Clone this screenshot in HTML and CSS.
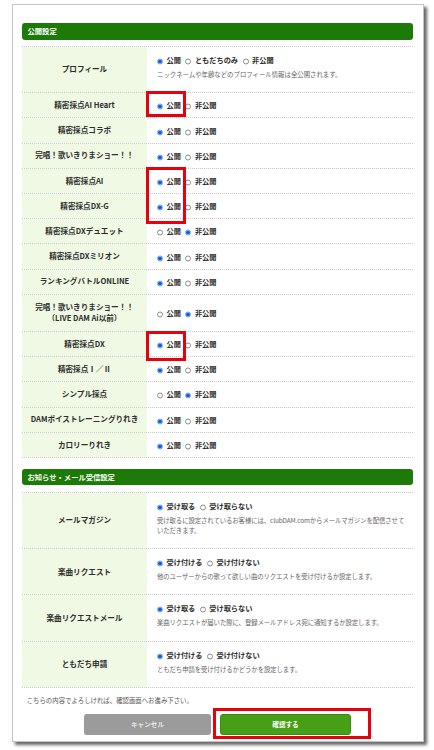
FILE: index.html
```html
<!DOCTYPE html>
<html lang="ja">
<head>
<meta charset="utf-8">
<title>公開設定</title>
<link rel="stylesheet" href="styles.css">
</head>
<body>
<div class="frame">
  <h2 class="sec-head">公開設定</h2>
  <div class="table">
    <div class="row row-desc">
      <div class="lbl">プロフィール</div>
      <div class="val">
        <div class="opts"><span class="opt"><i class="radio on"></i>公開</span><span class="opt"><i class="radio"></i>ともだちのみ</span><span class="opt"><i class="radio"></i>非公開</span></div>
        <p class="desc">ニックネームや年齢などのプロフィール情報は全公開されます。</p>
      </div>
    </div>
    <div class="row"><div class="lbl">精密採点AI Heart</div><div class="val"><div class="opts"><span class="opt"><i class="radio on"></i>公開</span><span class="opt"><i class="radio"></i>非公開</span></div></div></div>
    <div class="row"><div class="lbl">精密採点コラボ</div><div class="val"><div class="opts"><span class="opt"><i class="radio on"></i>公開</span><span class="opt"><i class="radio"></i>非公開</span></div></div></div>
    <div class="row"><div class="lbl">完唱！歌いきりまショー！！</div><div class="val"><div class="opts"><span class="opt"><i class="radio on"></i>公開</span><span class="opt"><i class="radio"></i>非公開</span></div></div></div>
    <div class="row"><div class="lbl">精密採点AI</div><div class="val"><div class="opts"><span class="opt"><i class="radio on"></i>公開</span><span class="opt"><i class="radio"></i>非公開</span></div></div></div>
    <div class="row"><div class="lbl">精密採点DX-G</div><div class="val"><div class="opts"><span class="opt"><i class="radio on"></i>公開</span><span class="opt"><i class="radio"></i>非公開</span></div></div></div>
    <div class="row"><div class="lbl">精密採点DXデュエット</div><div class="val"><div class="opts"><span class="opt"><i class="radio"></i>公開</span><span class="opt"><i class="radio on"></i>非公開</span></div></div></div>
    <div class="row"><div class="lbl">精密採点DXミリオン</div><div class="val"><div class="opts"><span class="opt"><i class="radio on"></i>公開</span><span class="opt"><i class="radio"></i>非公開</span></div></div></div>
    <div class="row"><div class="lbl">ランキングバトルONLINE</div><div class="val"><div class="opts"><span class="opt"><i class="radio on"></i>公開</span><span class="opt"><i class="radio"></i>非公開</span></div></div></div>
    <div class="row row-tall"><div class="lbl">完唱！歌いきりまショー！！<br>（LIVE DAM Ai以前）</div><div class="val"><div class="opts"><span class="opt"><i class="radio"></i>公開</span><span class="opt"><i class="radio on"></i>非公開</span></div></div></div>
    <div class="row"><div class="lbl">精密採点DX</div><div class="val"><div class="opts"><span class="opt"><i class="radio on"></i>公開</span><span class="opt"><i class="radio"></i>非公開</span></div></div></div>
    <div class="row"><div class="lbl">精密採点Ⅰ／Ⅱ</div><div class="val"><div class="opts"><span class="opt"><i class="radio on"></i>公開</span><span class="opt"><i class="radio"></i>非公開</span></div></div></div>
    <div class="row"><div class="lbl">シンプル採点</div><div class="val"><div class="opts"><span class="opt"><i class="radio"></i>公開</span><span class="opt"><i class="radio on"></i>非公開</span></div></div></div>
    <div class="row"><div class="lbl">DAMボイストレーニングりれき</div><div class="val"><div class="opts"><span class="opt"><i class="radio on"></i>公開</span><span class="opt"><i class="radio"></i>非公開</span></div></div></div>
    <div class="row"><div class="lbl">カロリーりれき</div><div class="val"><div class="opts"><span class="opt"><i class="radio on"></i>公開</span><span class="opt"><i class="radio"></i>非公開</span></div></div></div>
  </div>

  <h2 class="sec-head sec-head-2">お知らせ・メール受信設定</h2>
  <div class="table table-2">
    <div class="row row-desc">
      <div class="lbl">メールマガジン</div>
      <div class="val">
        <div class="opts"><span class="opt"><i class="radio on"></i>受け取る</span><span class="opt"><i class="radio"></i>受け取らない</span></div>
        <p class="desc">受け取るに設定されているお客様には、clubDAM.comからメールマガジンを配信させていただきます。</p>
      </div>
    </div>
    <div class="row row-desc">
      <div class="lbl">楽曲リクエスト</div>
      <div class="val">
        <div class="opts"><span class="opt"><i class="radio on"></i>受け付ける</span><span class="opt"><i class="radio"></i>受け付けない</span></div>
        <p class="desc">他のユーザーからの歌って欲しい曲のリクエストを受け付けるか設定します。</p>
      </div>
    </div>
    <div class="row row-desc">
      <div class="lbl">楽曲リクエストメール</div>
      <div class="val">
        <div class="opts"><span class="opt"><i class="radio on"></i>受け取る</span><span class="opt"><i class="radio"></i>受け取らない</span></div>
        <p class="desc">楽曲リクエストが届いた際に、登録メールアドレス宛に通知するか設定します。</p>
      </div>
    </div>
    <div class="row row-desc">
      <div class="lbl">ともだち申請</div>
      <div class="val">
        <div class="opts"><span class="opt"><i class="radio on"></i>受け付ける</span><span class="opt"><i class="radio"></i>受け付けない</span></div>
        <p class="desc">ともだち申請を受け付けるかどうかを設定します。</p>
      </div>
    </div>
  </div>

  <p class="note">こちらの内容でよろしければ、確認画面へお進み下さい。</p>
  <div class="btns">
    <button class="btn btn-cancel" type="button">キャンセル</button>
    <button class="btn btn-ok" type="button">確認する</button>
  </div>
</div>

<div class="mark mark-1"></div>
<div class="mark mark-2"></div>
<div class="mark mark-3"></div>
<div class="mark mark-4"></div>
</body>
</html>
```

FILE: styles.css
```css
* {
  box-sizing: border-box;
  margin: 0;
  padding: 0;
}

html,
body {
  background: #fff;
}

body {
  position: relative;
  width: 434px;
  height: 750px;
  overflow: hidden;
  font-family: "Noto Sans CJK JP", "Noto Sans", sans-serif;
  color: #333;
}

.frame {
  margin: 4px 0 0 12px;
  width: 412px;
  height: 738px;
  border: 1px solid #c4c4c4;
  box-shadow: 3px 3px 3px rgba(0, 0, 0, 0.6);
  padding: 18.3px 10px 0 9px;
  background: #fff;
}

.sec-head {
  height: 17px;
  background: #1d7a08;
  border-radius: 3px;
  color: #fff;
  font-size: 7.3px;
  font-weight: 700;
  line-height: 17px;
  padding-left: 5.5px;
}

.sec-head-2 {
  margin-top: 11px;
  height: 16.5px;
  line-height: 16.5px;
}

.table {
  margin-top: 5.4px;
  border-top: 1px dotted #c9c9c9;
}

.table-2 {
  margin-top: 6.3px;
}

.row {
  display: grid;
  grid-template-columns: 125px 1fr;
  min-height: 25.2px;
  border-bottom: 1px dotted #c9c9c9;
}

.lbl {
  background: #f0f9e4;
  display: flex;
  align-items: center;
  justify-content: center;
  text-align: center;
  font-size: 7.6px;
  font-weight: 700;
  line-height: 10.6px;
  padding: 0 4px;
  color: #2e2e2e;
}

.row-tall .lbl {
  padding: 7.5px 4px;
}

.val {
  display: flex;
  flex-direction: column;
  justify-content: center;
  padding: 0 10px;
}

.row-desc .val {
  justify-content: flex-start;
  padding: 7px 8px 12px 10px;
}

.table-2 .row-desc .val {
  padding-top: 7px;
  padding-right: 4px;
  padding-bottom: 11.5px;
}

.opts {
  display: flex;
  align-items: center;
  height: 12px;
  font-size: 7.2px;
  font-weight: 700;
  color: #2e2e2e;
}

.opt {
  display: flex;
  align-items: center;
  margin-right: 4.5px;
}

.radio {
  display: block;
  width: 6px;
  height: 6px;
  border-radius: 50%;
  border: 1px solid #8c8c8c;
  background: #fff;
  margin-right: 3.5px;
  transform: translateY(1.5px);
}

.radio.on {
  border-color: #6b9ff0;
  background: radial-gradient(circle, #0f5fe0 0 50%, #5d95ee 70%);
}

.desc {
  margin-top: 4px;
  font-size: 6.4px;
  line-height: 10.6px;
  color: #666;
}

.table-2 .desc {
  letter-spacing: -0.1px;
}

.note {
  margin-top: 8px;
  padding-left: 4.7px;
  font-size: 6.4px;
  line-height: 10px;
  color: #555;
}

.btns {
  display: flex;
  justify-content: center;
  gap: 9.3px;
  margin-top: 8px;
}

.btn {
  height: 21px;
  border: none;
  border-radius: 3px;
  font-family: inherit;
  font-size: 6.6px;
  font-weight: 700;
  color: #fff;
  display: flex;
  align-items: center;
  justify-content: center;
}

.btn-cancel {
  width: 126.7px;
  background: #9b9b9b;
  color: #e6e6e6;
}

.btn-ok {
  width: 130.7px;
  background: #46a016;
  border: 1px solid #3a8c0f;
}

.mark {
  position: absolute;
  border: 3px solid #e8000c;
}

.mark-1 {
  left: 145.7px;
  top: 90.7px;
  width: 40.3px;
  height: 26.6px;
}

.mark-2 {
  left: 145.7px;
  top: 167.3px;
  width: 40.3px;
  height: 57px;
}

.mark-3 {
  left: 145.7px;
  top: 330.7px;
  width: 40.3px;
  height: 30px;
}

.mark-4 {
  left: 213px;
  top: 707.7px;
  width: 157.7px;
  height: 31.6px;
}
```
